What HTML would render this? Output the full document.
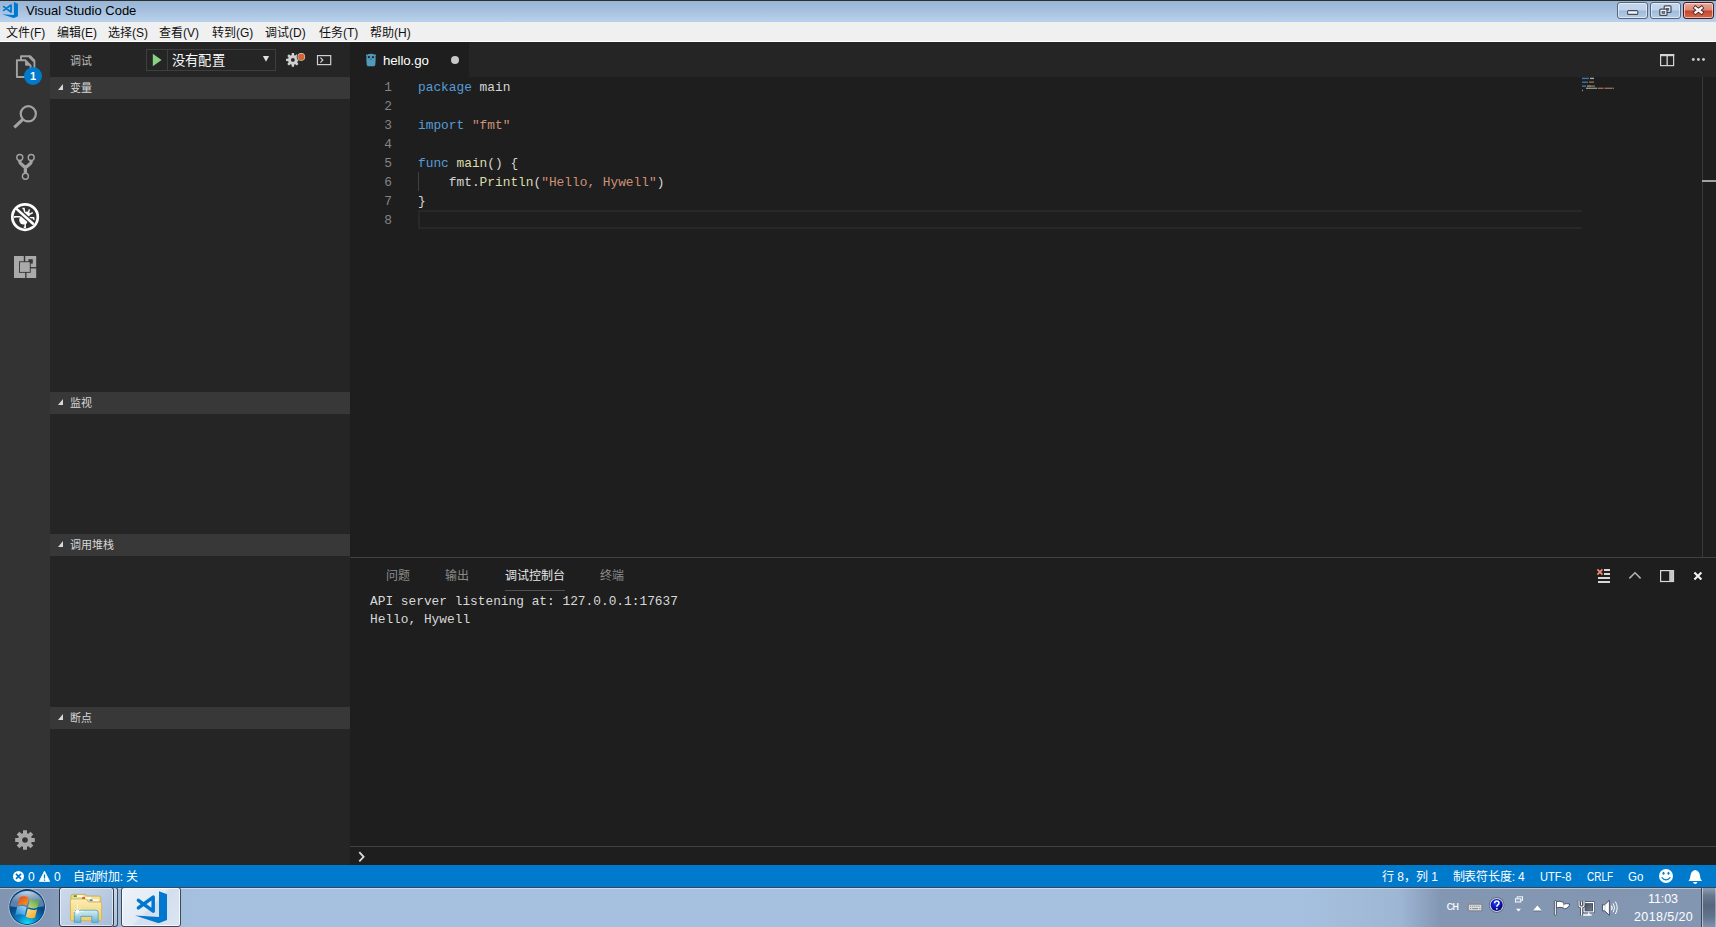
<!DOCTYPE html>
<html lang="zh-CN">
<head>
<meta charset="utf-8">
<title>Visual Studio Code</title>
<style>
html,body{margin:0;padding:0;}
body{width:1716px;height:927px;position:relative;overflow:hidden;background:#1e1e1e;font-family:"Liberation Sans",sans-serif;font-size:12px;color:#ccc;}
.abs{position:absolute;}
div,span,svg{box-sizing:border-box;}
.t{position:absolute;white-space:nowrap;overflow:visible;}
.cj{display:inline-block;white-space:nowrap;overflow:visible;vertical-align:baseline;text-align:justify;text-align-last:justify;}
/* title bar */
#titlebar{left:0;top:0;width:1716px;height:22px;background:linear-gradient(#9ab6d6 0%,#9db9d9 20%,#b9d2ec 100%);border-top:1px solid #2e2e2e;}
#menubar{left:0;top:22px;width:1716px;height:20px;background:#f0f0f0;border-bottom:1px solid #fff;color:#111;}
.wbtn{position:absolute;top:1px;height:17px;border:1px solid #56657d;border-radius:3px;box-shadow:inset 0 0 0 1px rgba(255,255,255,.55);background:linear-gradient(#c3d6ec 0%,#bfd3ea 48%,#9fbbda 52%,#b4cce6 100%);}
/* workbench */
#activity{left:0;top:42px;width:50px;height:823px;background:#333333;}
#sidebar{left:50px;top:42px;width:300px;height:823px;background:#252526;}
.sec{position:absolute;left:0;width:300px;height:22px;background:#383838;}
.sec i{position:absolute;left:8px;top:7px;width:0;height:0;border-left:5.5px solid transparent;border-bottom:6px solid #d8d8d8;}
.sec span{position:absolute;left:20px;top:0;line-height:22px;font-size:11px;font-weight:normal;color:#d6d6d6;white-space:nowrap;}
#tabs{left:350px;top:42px;width:1366px;height:35px;background:#252526;}
#tab{left:0;top:0;width:119px;height:35px;background:#1e1e1e;}
#editor{left:350px;top:77px;width:1366px;height:480px;background:#1e1e1e;}
.ln{margin-top:1px;position:absolute;left:0;width:42px;text-align:right;height:19px;line-height:19px;color:#858585;font-family:"Liberation Mono",monospace;font-size:12.83px;}
.cl{margin-top:1px;position:absolute;left:68px;height:19px;line-height:19px;color:#d4d4d4;font-family:"Liberation Mono",monospace;font-size:12.83px;white-space:pre;}
.k{color:#569cd6;}.s{color:#ce9178;}.f{color:#dcdcaa;}
#panel{left:350px;top:557px;width:1366px;height:308px;background:#1e1e1e;border-top:1px solid #414141;}
.pt{position:absolute;top:10px;height:16px;line-height:16px;font-size:12px;color:#8b8b8b;white-space:nowrap;}
.con{position:absolute;left:20px;height:18px;line-height:18px;color:#d8d8d8;font-family:"Liberation Mono",monospace;font-size:12.83px;white-space:pre;}
#status{left:0;top:865px;width:1716px;height:22px;background:#007acc;color:#fff;font-size:12px;}
#status .t{top:1px;line-height:22px;height:22px;}
#taskbar{left:0;top:887px;width:1716px;height:40px;background:linear-gradient(90deg,#8195b3 0,#8499b7 50px,#9fb9d7 120px,#a6c1df 200px,#a6c1df 1300px,#9db6d4 1400px,#8397b3 1440px,#8296b1 1716px);}
</style>
</head>
<body>
<svg width="0" height="0" style="position:absolute">
  <defs>
    <symbol id="vsc" viewBox="0 0 32.2 32.2">
      <path d="M24 0.2 L32.1 3.4 V28.9 L24 32.1Z M-0.1 24.5 L24 26.1 V32.1 L23.2 32.1Z" fill="#0078d0"/>
      <path d="M3.4 9.3 L18.2 20.1 V6.1 L3.4 16.9" stroke="#0078d0" stroke-width="3.5" fill="none" stroke-linejoin="round" stroke-linecap="round"/>
    </symbol>
    <radialGradient id="orbTop" cx="50%" cy="0%" r="75%"><stop offset="0" stop-color="#c6d6e6"/><stop offset="1" stop-color="#5b82aa"/></radialGradient>
    <radialGradient id="orbBot" cx="50%" cy="100%" r="70%"><stop offset="0" stop-color="#12e6ff"/><stop offset=".4" stop-color="#0a86c8"/><stop offset=".85" stop-color="#084a86"/><stop offset="1" stop-color="#074680"/></radialGradient>
    <linearGradient id="fr" x1="0" y1="0" x2="1" y2="1"><stop offset="0" stop-color="#e2401c"/><stop offset="1" stop-color="#f7a21c"/></linearGradient>
    <linearGradient id="fg" x1="0" y1="1" x2="1" y2="0"><stop offset="0" stop-color="#c4dc8a"/><stop offset="1" stop-color="#4ea032"/></linearGradient>
    <linearGradient id="fb" x1="0" y1="1" x2="1" y2="0"><stop offset="0" stop-color="#1a86d2"/><stop offset="1" stop-color="#a8d8f4"/></linearGradient>
    <linearGradient id="fy" x1="0" y1="0" x2="1" y2="1"><stop offset="0" stop-color="#fbe49a"/><stop offset="1" stop-color="#f8a21a"/></linearGradient>
    <linearGradient id="fold" x1="0" y1="0" x2="0" y2="1"><stop offset="0" stop-color="#fbeeb8"/><stop offset="1" stop-color="#f1cd62"/></linearGradient>
    <linearGradient id="glass" x1="0" y1="0" x2="0" y2="1"><stop offset="0" stop-color="#d6f0fb"/><stop offset="1" stop-color="#5fb2dc"/></linearGradient>
    <radialGradient id="helpb" cx="40%" cy="35%" r="70%"><stop offset="0" stop-color="#2a3cf0"/><stop offset=".55" stop-color="#0a14c0"/><stop offset="1" stop-color="#00045e"/></radialGradient>
  </defs>
</svg>

<!-- ===== Windows title bar ===== -->
<div id="titlebar" class="abs">
  <svg class="abs" style="left:2.3px;top:1px" width="16" height="16"><use href="#vsc" width="16" height="16"/></svg>
  <span class="t" style="left:26px;top:2px;font-size:13px;line-height:16px;color:#000;">Visual Studio Code</span>
  <div class="wbtn" style="left:1617px;width:31px;"></div>
  <div class="wbtn" style="left:1650px;width:31px;"></div>
  <div class="wbtn" style="left:1683px;width:31px;border-color:#4d1a1c;background:linear-gradient(#e9aa9c 0%,#dc8674 48%,#c4452b 52%,#d2684c 100%);"></div>
  <svg class="abs" style="left:1617px;top:-1px" width="99" height="22" viewBox="1617 0 99 22">
    <rect x="1627.6" y="10.6" width="10.2" height="3.8" rx="1" fill="#f7f7f7" stroke="#434d5e" stroke-width="1.1"/>
    <rect x="1664.2" y="5.9" width="6.8" height="6.4" rx="0.9" fill="#f1f3f7" stroke="#434d5e" stroke-width="1.25"/>
    <rect x="1666.6" y="8.4" width="2.2" height="1.8" fill="#6c7a90" stroke="#434d5e" stroke-width=".7"/>
    <rect x="1659.8" y="9.1" width="7.2" height="6.3" rx="0.9" fill="#f1f3f7" stroke="#434d5e" stroke-width="1.25"/>
    <rect x="1662" y="11.6" width="2.8" height="1.7" fill="#6c7a90" stroke="#434d5e" stroke-width=".7"/>
    <path d="M1693.9 6.7 L1703.1 13.7 M1703.1 6.7 L1693.9 13.7" fill="none" stroke="#43211e" stroke-width="4"/>
    <path d="M1694.5 7.15 L1702.5 13.25 M1702.5 7.15 L1694.5 13.25" fill="none" stroke="#f6f6f6" stroke-width="2.4"/>
  </svg>
</div>

<!-- ===== Menu bar ===== -->
<div id="menubar" class="abs">
  <span class="t" style="left:6px;top:4px;line-height:14px;"><span class="cj" style="width:24px">文件</span>(F)</span>
  <span class="t" style="left:57px;top:4px;line-height:14px;"><span class="cj" style="width:24px">编辑</span>(E)</span>
  <span class="t" style="left:108px;top:4px;line-height:14px;"><span class="cj" style="width:24px">选择</span>(S)</span>
  <span class="t" style="left:159px;top:4px;line-height:14px;"><span class="cj" style="width:24px">查看</span>(V)</span>
  <span class="t" style="left:212px;top:4px;line-height:14px;"><span class="cj" style="width:24px">转到</span>(G)</span>
  <span class="t" style="left:265px;top:4px;line-height:14px;"><span class="cj" style="width:24px">调试</span>(D)</span>
  <span class="t" style="left:319px;top:4px;line-height:14px;"><span class="cj" style="width:24px">任务</span>(T)</span>
  <span class="t" style="left:370px;top:4px;line-height:14px;"><span class="cj" style="width:24px">帮助</span>(H)</span>
</div>

<!-- ===== Activity bar ===== -->
<div id="activity" class="abs">
<svg class="abs" style="left:0;top:0" width="50" height="823" viewBox="0 42 50 823">
  <!-- explorer -->
  <g fill="none" stroke="#a3a3a3" stroke-width="1.9" stroke-linejoin="round">
    <path d="M21 60 V56.2 H30.2 L34.4 60.6 V72.2 H31"/>
    <path d="M29.6 56.6 L34 61.2" stroke-width="2.6"/>
    <path d="M16.9 60.2 H25.2 L30.6 65.6 V77 H16.9 Z"/>
    <path d="M25.6 61.4 V65.2 H29.4 Z" fill="#a3a3a3" stroke-width="1"/>
  </g>
  <circle cx="33" cy="76" r="9" fill="#007acc"/>
  <!-- search -->
  <circle cx="28.3" cy="113.8" r="7.6" fill="none" stroke="#a3a3a3" stroke-width="2.2"/>
  <path d="M22.6 119.6 L14.3 127.3" stroke="#a3a3a3" stroke-width="3.2" stroke-linecap="butt"/>
  <!-- git -->
  <g fill="none" stroke="#a3a3a3">
    <path d="M19.8 160.4 V161.6 Q19.8 162.6 20.6 163.4 L25.4 167.8 L30.4 163.4 Q31.2 162.6 31.2 161.6 V160.4 M25.4 166 V173.6" stroke-width="3.3" stroke-linejoin="round"/>
    <circle cx="19.8" cy="157.5" r="3" stroke-width="1.4"/>
    <circle cx="31.2" cy="157.5" r="3" stroke-width="1.4"/>
    <circle cx="25.4" cy="176.3" r="3" stroke-width="1.4"/>
  </g>
  <!-- debug (active, white) -->
  <g>
    <circle cx="25.06" cy="217.06" r="12.75" fill="none" stroke="#fff" stroke-width="2.7"/>
    <g fill="#fff" stroke="#fff">
      <ellipse cx="23.6" cy="220" rx="4.4" ry="4.6" stroke="none"/>
      <ellipse cx="27" cy="214.2" rx="2.9" ry="2.7" stroke="none"/>
      <path d="M24.8 213.4 L24 208.6 H22.4 M28.4 212.6 L29.4 209.4 M29.4 214.4 L32.8 212.6 M28.6 217.7 H33.6 L34 219.8 M20.4 216.7 H14.8 L14.6 217.8 M25.2 222 V227.2 H23.8" stroke-width="1.5" fill="none"/>
    </g>
    <clipPath id="dbgc"><circle cx="25.06" cy="217.06" r="11.6"/></clipPath><path d="M13 205.6 L37 227.3" stroke="#333" stroke-width="5" clip-path="url(#dbgc)"/>
    <path d="M16.3 208.6 L33.9 224.5" stroke="#fff" stroke-width="2.6"/>
  </g>
  <!-- extensions -->
  <g fill="#aaaaaa">
    <path d="M14 256 H23.8 V278 H14Z M23.8 268 H25.2 V278 H23.8Z"/>
    <path d="M25.2 256 H36.2 V267.1 H25.2Z"/>
    <path d="M26.5 268.4 H36.2 V278 H26.5Z"/>
    <rect x="28.4" y="259.2" width="4.4" height="4.4" fill="#3a3a3a"/>
    <rect x="19" y="261.3" width="11.7" height="11.5" fill="#333"/>
    <rect x="19.9" y="262.2" width="9.9" height="9.7"/>
  </g>
  <!-- gear -->
  <g transform="translate(25 840)" fill="#a8a8a8">
    <path fill-rule="evenodd" d="M-2.01 -6.71 L-1.95 -9.81 L1.95 -9.81 L2.01 -6.71 L3.32 -6.16 L5.56 -8.31 L8.31 -5.56 L6.16 -3.32 L6.71 -2.01 L9.81 -1.95 L9.81 1.95 L6.71 2.01 L6.16 3.32 L8.31 5.56 L5.56 8.31 L3.32 6.16 L2.01 6.71 L1.95 9.81 L-1.95 9.81 L-2.01 6.71 L-3.32 6.16 L-5.56 8.31 L-8.31 5.56 L-6.16 3.32 L-6.71 2.01 L-9.81 1.95 L-9.81 -1.95 L-6.71 -2.01 L-6.16 -3.32 L-8.31 -5.56 L-5.56 -8.31 L-3.32 -6.16Z M2.80 0 A2.80 2.80 0 1 0 -2.80 0 A2.80 2.80 0 1 0 2.80 0Z"/>
  </g>
</svg>
<span class="t" style="left:28px;top:28px;width:10px;text-align:center;font-size:11px;line-height:12px;color:#fff;font-weight:bold;">1</span>
</div>

<!-- ===== Side bar (debug) ===== -->
<div id="sidebar" class="abs">
  <span class="t" style="left:20px;top:11px;width:22px;text-align:justify;text-align-last:justify;font-size:11px;line-height:16px;color:#bbbbbb;">调试</span>
  <div class="abs" style="left:96px;top:7px;width:130px;height:22px;border:1px solid #3e3e3e;background:#252526;"></div>
  <div class="abs" style="left:117px;top:8px;width:1px;height:20px;background:#3e3e3e;"></div>
  <svg class="abs" style="left:100px;top:10px" width="14" height="16" viewBox="0 0 14 16"><path d="M2.8 1.8 L11.6 8 L2.8 14.2Z" fill="#89d185"/></svg>
  <span class="t" style="left:121.6px;top:10px;width:53.2px;text-align:justify;text-align-last:justify;font-size:13.3px;line-height:18px;color:#fafafa;">没有配置</span>
  <svg class="abs" style="left:212px;top:13px" width="8" height="8" viewBox="0 0 8 8"><path d="M0.9 1 H7.1 L4 6.8Z" fill="#e0e0e0"/></svg>
  <svg class="abs" style="left:232px;top:6px" width="56" height="24" viewBox="0 0 56 24">
    <g transform="translate(10.9 11.9)"><path fill-rule="evenodd" fill="#d0d0d0" d="M-1.33 -4.72 L-1.13 -6.81 L1.13 -6.81 L1.33 -4.72 L2.39 -4.28 L4.01 -5.61 L5.61 -4.01 L4.28 -2.39 L4.72 -1.33 L6.81 -1.13 L6.81 1.13 L4.72 1.33 L4.28 2.39 L5.61 4.01 L4.01 5.61 L2.39 4.28 L1.33 4.72 L1.13 6.81 L-1.13 6.81 L-1.33 4.72 L-2.39 4.28 L-4.01 5.61 L-5.61 4.01 L-4.28 2.39 L-4.72 1.33 L-6.81 1.13 L-6.81 -1.13 L-4.72 -1.33 L-4.28 -2.39 L-5.61 -4.01 L-4.01 -5.61 L-2.39 -4.28Z M1.90 0 A1.90 1.90 0 1 0 -1.90 0 A1.90 1.90 0 1 0 1.90 0Z"/></g>
    <circle cx="19.3" cy="8.9" r="4.6" fill="#252526"/>
    <circle cx="19.3" cy="8.9" r="3.8" fill="#e6d3c8"/>
    <circle cx="19.3" cy="8.9" r="3.2" fill="#d16632"/>
    <rect x="35.5" y="7.6" width="13.2" height="9" fill="none" stroke="#d0d0d0" stroke-width="1.2"/>
    <path d="M38.4 9.6 L40.8 12 L38.4 14.6" fill="none" stroke="#d0d0d0" stroke-width="1.2"/>
  </svg>
  <div class="sec" style="top:35px"><i></i><span style="width:22px;text-align:justify;text-align-last:justify;">变量</span></div>
  <div class="sec" style="top:350px"><i></i><span style="width:22px;text-align:justify;text-align-last:justify;">监视</span></div>
  <div class="sec" style="top:492px"><i></i><span style="width:44px;text-align:justify;text-align-last:justify;">调用堆栈</span></div>
  <div class="sec" style="top:665px"><i></i><span style="width:22px;text-align:justify;text-align-last:justify;">断点</span></div>
</div>

<!-- ===== Editor tabs ===== -->
<div id="tabs" class="abs">
  <div id="tab" class="abs">
    <svg class="abs" style="left:14px;top:10px" width="14" height="16" viewBox="364 52 14 16">
      <path d="M366 55.2 Q365.6 54.4 366.6 54.6 L367.4 54.8 Q368.4 53.8 371 53.8 Q373.6 53.8 374.6 54.8 L375.4 54.6 Q376.4 54.4 376 55.2 L375.5 56.2 Q375.9 59 375.5 62 Q375.6 65 374.4 66.2 H367.6 Q366.4 65 366.5 62 Q366.1 59 366.5 56.2Z" fill="#519aba"/>
      <circle cx="368.9" cy="57.2" r="1.15" fill="#1b2a33"/><circle cx="372.9" cy="57.2" r="1.15" fill="#1b2a33"/>
      <ellipse cx="370.9" cy="59.4" rx="0.8" ry="0.5" fill="#24506a"/>
    </svg>
    <span class="t" style="left:33px;top:10px;font-size:13.3px;line-height:18px;color:#fff;letter-spacing:-0.1px;">hello.go</span>
    <div class="abs" style="left:101px;top:14px;width:8px;height:8px;border-radius:50%;background:#c8c8c8;"></div>
  </div>
  <svg class="abs" style="left:1306px;top:8px" width="60" height="20" viewBox="1656 50 60 20">
    <rect x="1660.6" y="54.6" width="13" height="11" fill="none" stroke="#d4d4d4" stroke-width="1.2"/>
    <rect x="1660" y="54" width="14.2" height="2.2" fill="#d4d4d4"/>
    <rect x="1666.5" y="55" width="1.3" height="11" fill="#d4d4d4"/>
    <circle cx="1693.3" cy="59.5" r="1.45" fill="#c8c8c8"/><circle cx="1698.4" cy="59.5" r="1.45" fill="#c8c8c8"/><circle cx="1703.5" cy="59.5" r="1.45" fill="#c8c8c8"/>
  </svg>
</div>

<!-- ===== Editor ===== -->
<div id="editor" class="abs">
  <div class="ln" style="top:0">1</div>
  <div class="ln" style="top:19px">2</div>
  <div class="ln" style="top:38px">3</div>
  <div class="ln" style="top:57px">4</div>
  <div class="ln" style="top:76px">5</div>
  <div class="ln" style="top:95px">6</div>
  <div class="ln" style="top:114px">7</div>
  <div class="ln" style="top:133px">8</div>
  <div class="abs" style="left:68px;top:133px;width:1164px;height:19px;border:2px solid #282828;border-right:none;"></div>
  <div class="abs" style="left:68px;top:95px;width:1px;height:19px;background:#404040;"></div>
  <div class="cl" style="top:0"><span class="k">package</span> main</div>
  <div class="cl" style="top:38px"><span class="k">import</span> <span class="s">"fmt"</span></div>
  <div class="cl" style="top:76px"><span class="k">func</span> <span class="f">main</span>() {</div>
  <div class="cl" style="top:95px">    fmt.<span class="f">Println</span>(<span class="s">"Hello, Hywell"</span>)</div>
  <div class="cl" style="top:114px">}</div>
  <svg class="abs" style="left:1232px;top:0" width="40" height="16" viewBox="0 0 40 16" opacity=".8">
    <rect x="0" y="0.7" width="7" height="1.4" fill="#4a8ec8"/><rect x="8" y="0.7" width="4" height="1.4" fill="#c8c8c8"/>
    <rect x="0" y="4.6" width="6" height="1.3" fill="#4a8ec8"/><rect x="7" y="4.4" width="5" height="1.4" fill="#b87c60"/>
    <rect x="0" y="8.4" width="4" height="1.4" fill="#4a8ec8"/><rect x="5" y="8.4" width="4" height="1.4" fill="#b8b890"/><rect x="9" y="8.4" width="4" height="1.4" fill="#8a8a8a"/>
    <rect x="4" y="10.6" width="4" height="1.4" fill="#b0b0b0"/><rect x="8" y="10.6" width="7" height="1.4" fill="#b0b088"/><rect x="15.6" y="10.6" width="6" height="1.4" fill="#b87c60"/><rect x="22.6" y="10.6" width="8" height="1.4" fill="#b87c60"/><rect x="31" y="10.6" width="1" height="1.4" fill="#909090"/>
    <rect x="0" y="12.8" width="1" height="1.4" fill="#b0b0b0"/>
  </svg>
  <div class="abs" style="left:1352px;top:0;width:1px;height:480px;background:#3a3a3a;"></div>
  <div class="abs" style="left:1352px;top:103px;width:14px;height:2px;background:#a0a0a0;"></div>
</div>

<!-- ===== Panel ===== -->
<div id="panel" class="abs">
  <span class="pt" style="left:36px;width:24px;text-align:justify;text-align-last:justify;">问题</span>
  <span class="pt" style="left:95px;width:24px;text-align:justify;text-align-last:justify;">输出</span>
  <span class="pt" style="left:155px;width:60px;text-align:justify;text-align-last:justify;color:#e7e7e7;">调试控制台</span>
  <span class="pt" style="left:250px;width:24px;text-align:justify;text-align-last:justify;">终端</span>
  <div class="abs" style="left:155px;top:32px;width:60px;height:1px;background:#505050;"></div>
  <div class="con" style="top:35px">API server listening at: 127.0.0.1:17637</div>
  <div class="con" style="top:53px">Hello, Hywell</div>
  <div class="abs" style="left:0;top:288px;width:1366px;height:1px;background:#414141;"></div>
  <svg class="abs" style="left:1240px;top:6px" width="120" height="26" viewBox="1590 564 120 26">
    <g fill="#d8d8d8"><rect x="1604" y="569" width="6" height="2"/><rect x="1604" y="573" width="6" height="2"/><rect x="1598" y="577" width="12" height="2"/><rect x="1598" y="581" width="12" height="2"/></g>
    <path d="M1597.4 569.4 L1602.4 574.6 M1602.4 569.4 L1597.4 574.6" stroke="#f48771" stroke-width="1.7" fill="none"/>
    <path d="M1629.4 578.4 L1635 572.8 L1640.6 578.4" stroke="#b4b4b4" stroke-width="1.5" fill="none"/>
    <rect x="1660.6" y="570.6" width="12.9" height="10.9" fill="none" stroke="#d8d8d8" stroke-width="1.2"/>
    <rect x="1669.2" y="570.6" width="4.3" height="10.9" fill="#c8c8c8"/>
    <path d="M1694.4 572.6 L1701.4 579.6 M1701.4 572.6 L1694.4 579.6" stroke="#f0f0f0" stroke-width="2.1" fill="none"/>
  </svg>
  <svg class="abs" style="left:6px;top:291px" width="12" height="14" viewBox="356 849 12 14"><path d="M359.3 852.2 L363.6 856.8 L359.3 861.4" fill="none" stroke="#dcdcdc" stroke-width="1.8"/></svg>
</div>

<!-- ===== Status bar ===== -->
<div id="status" class="abs">
  <svg class="abs" style="left:10px;top:3px" width="44" height="17" viewBox="10 868 44 17">
    <circle cx="18.5" cy="876.4" r="5.5" fill="#fff"/>
    <path d="M16 873.9 L21 878.9 M21 873.9 L16 878.9" stroke="#007acc" stroke-width="1.7"/>
    <path d="M44.5 871.2 L49.7 881.4 H39.3Z" fill="#fff" stroke="#fff" stroke-width=".8" stroke-linejoin="round"/>
    <path d="M44.5 874.4 V878.6 M44.5 879.6 V880.8" stroke="#007acc" stroke-width="1.3"/>
  </svg>
  <svg class="abs" style="left:1656px;top:3px" width="50" height="18" viewBox="1656 868 50 18">
    <circle cx="1666" cy="876" r="7" fill="#fff"/>
    <ellipse cx="1663.5" cy="873.3" rx="1" ry="1.5" fill="#007acc"/><ellipse cx="1668.5" cy="873.3" rx="1" ry="1.5" fill="#007acc"/>
    <path d="M1661.6 877.4 Q1666 882.4 1670.4 877.4" fill="none" stroke="#007acc" stroke-width="1.3"/>
    <path d="M1695.2 870 Q1699.6 871 1700 876 Q1700.2 879 1702 880.9 H1688.5 Q1690.2 879 1690.4 876 Q1690.8 871 1695.2 870Z" fill="#fff"/>
    <path d="M1693 882 H1697.4 Q1696.8 884 1695.2 884 Q1693.6 884 1693 882Z" fill="#fff"/>
  </svg>
  <span class="t" style="left:28px;">0</span>
  <span class="t" style="left:54px;">0</span>
  <span class="t" style="left:73px;letter-spacing:-0.3px;"><span class="cj" style="width:46.8px">自动附加</span>: 关</span>
  <span class="t" style="left:1382px;"><span class="cj" style="width:12px">行</span> 8<span class="cj" style="width:12px">，</span><span class="cj" style="width:12px">列</span> 1</span>
  <span class="t" style="left:1452.5px;letter-spacing:-0.15px;"><span class="cj" style="width:59.25px">制表符长度</span>: 4</span>
  <span class="t" style="left:1540px;transform:scaleX(.925);transform-origin:0 0;">UTF-8</span>
  <span class="t" style="left:1586.5px;transform:scaleX(.83);transform-origin:0 0;">CRLF</span>
  <span class="t" style="left:1627.5px;transform:scaleX(.96);transform-origin:0 0;">Go</span>
</div>

<!-- ===== Windows taskbar ===== -->
<div id="taskbar" class="abs">
  <div class="abs" style="left:0;top:0;width:1716px;height:1px;background:#3a4658;"></div>
  <div class="abs" style="left:0;top:1px;width:1716px;height:1px;background:rgba(255,255,255,.42);"></div>
  <!-- start orb -->
  <svg class="abs" style="left:5px;top:0" width="44" height="40" viewBox="5 887 44 40">
    <circle cx="27.1" cy="907" r="18.6" fill="#c4d2e2"/>
    <circle cx="27.1" cy="907" r="17.9" fill="#0b4378"/>
    <circle cx="27.1" cy="907" r="17.1" fill="url(#orbBot)"/>
    <path d="M10.1 906.2 A17.1 17.1 0 0 1 44.1 906.2 Q27 909.2 10.1 906.2Z" fill="url(#orbTop)"/>
    <path d="M19.6 897.4 Q24 895 28.8 897.6 L27 905.6 Q22.6 903.4 17.6 905.6Z" fill="url(#fr)"/>
    <path d="M30 899 Q34.6 901.6 39.2 899.4 L37.4 907.6 Q32.8 909.6 28.2 907Z" fill="url(#fg)"/>
    <path d="M17.2 907 Q21.8 905 26.6 907.2 L24.6 915.4 Q20 913.2 15.2 915.4Z" fill="url(#fb)"/>
    <path d="M27.8 908.6 Q32.4 911.2 37 909.2 L35 917.4 Q30.4 919.4 25.8 916.8Z" fill="url(#fy)"/>
  </svg>
  <!-- explorer button -->
  <div class="abs" style="left:113px;top:0;width:5px;height:39.5px;border:1px solid #3c4a60;border-left:none;border-radius:0 3px 3px 0;background:linear-gradient(#c9d8ea,#a9bfdc);"></div>
  <div class="abs" style="left:59px;top:0;width:55px;height:39.5px;border:1px solid #2c384b;border-radius:3px;box-shadow:inset 0 0 0 1px rgba(255,255,255,.55);background:linear-gradient(135deg,#cddaeb 0%,#bccde3 50%,#a6bcd9 100%);"></div>
  <svg class="abs" style="left:68px;top:5px" width="36" height="32" viewBox="68 892 36 32">
    <path d="M71 896.2 Q71 894.4 72.8 894.4 H85 Q86.4 894.4 86.6 896 H99 Q100.8 896 100.8 898 V910 H71Z" fill="#f3d98a" stroke="#c9a84e" stroke-width=".8"/>
    <rect x="73.6" y="895.3" width="3.2" height="1.7" fill="#1db32a"/><rect x="77" y="895.3" width="6" height="1.7" fill="#fff"/>
    <path d="M81.4 897.4 H99.6 V900 H81.4Z" fill="#f6e2a0"/>
    <rect x="82.2" y="897.3" width="2.8" height="1.7" fill="#d8281e"/><rect x="85.2" y="897.3" width="6" height="1.7" fill="#fff"/>
    <rect x="89.8" y="899.4" width="2.8" height="1.7" fill="#1e8fe6"/><rect x="92.8" y="899.4" width="5.6" height="1.7" fill="#fff"/>
    <path d="M70.4 900.4 Q70.4 899 72 899 H86.4 L88.4 902 H100 Q101.6 902 101.6 903.6 V919.4 Q101.6 920.8 100 920.8 H72 Q70.4 920.8 70.4 919.4Z" fill="url(#fold)" stroke="#d1ad4c" stroke-width=".8"/>
    <path d="M74.4 922.4 V912.6 Q74.4 910.2 77 910.2 H95.6 Q98.2 910.2 98.2 912.6 V922.4 H91.8 V916.4 H80.8 V922.4Z" fill="url(#glass)" stroke="#3d9ad2" stroke-width=".8" opacity=".93"/>
    <path d="M77.4 904 V915 M73 911.4 H84 M74.6 908.6 L81 914.6 M80.6 908 L74.6 914.8" stroke="#fff" stroke-width=".7" opacity=".85"/>
    <circle cx="77.4" cy="911.4" r="1.7" fill="#fff"/>
  </svg>
  <!-- vscode button (active) -->
  <div class="abs" style="left:121px;top:0;width:60px;height:39.5px;border:1px solid #3c4a60;border-radius:3px;box-shadow:inset 0 0 0 1px rgba(255,255,255,.75);background:linear-gradient(135deg,#eef3f9 0%,#e2eaf4 48%,#d3dfee 52%,#dbe5f2 100%);"></div>
  <svg class="abs" style="left:135px;top:3.7px" width="32.2" height="32.2"><use href="#vsc" width="32.2" height="32.2"/></svg>
  <!-- tray -->
  <span class="t" style="left:1446.5px;top:13px;font-family:'Liberation Mono',monospace;font-size:11.5px;line-height:14px;color:#fff;letter-spacing:-1.2px;">CH</span>
  <svg class="abs" style="left:1464px;top:6px" width="160" height="32" viewBox="1464 893 160 32">
    <!-- keyboard -->
    <path d="M1469.6 903.4 Q1471.4 899.4 1474 900 T1478 900.4 T1480.6 898.4" fill="none" stroke="#8d939b" stroke-width="1.1"/>
    <rect x="1468.2" y="904.1" width="13.8" height="6.8" rx="1" fill="#dadde1" stroke="#82888f" stroke-width="1.3"/>
    <path d="M1470 906.2 H1480.4" stroke="#80868e" stroke-width="1" stroke-dasharray="1.2 .9"/>
    <path d="M1470 908.6 H1471.2 M1472.2 908.6 H1478 M1479.2 908.6 H1480.4" stroke="#80868e" stroke-width="1"/>
    <!-- help -->
    <circle cx="1496.7" cy="905" r="7.7" fill="#59647a"/>
    <circle cx="1496.7" cy="905" r="7" fill="#c8d0dc"/>
    <circle cx="1496.7" cy="905" r="6" fill="url(#helpb)"/>
    <path d="M1494.6 903.2 Q1494.6 901 1496.8 901 Q1499 901 1499 903 Q1499 904.4 1497.6 905.2 Q1496.8 905.8 1496.8 906.8" fill="none" stroke="#fff" stroke-width="1.5"/>
    <circle cx="1496.8" cy="908.8" r=".9" fill="#fff"/>
    <!-- tiny restore + arrow -->
    <rect x="1517.2" y="896.8" width="5.4" height="3.4" fill="none" stroke="#fff" stroke-width=".9"/>
    <rect x="1515.4" y="898.8" width="5.4" height="3.2" fill="#8a9fbc" stroke="#fff" stroke-width=".9"/>
    <path d="M1516 908.8 H1521 L1518.5 911.6Z" fill="#fff"/>
    <!-- show hidden -->
    <path d="M1533 910.8 L1537.4 905.5 L1541.8 910.8Z" fill="#fff"/><path d="M1533.4 911 H1541.4" stroke="#56627a" stroke-width=".7"/>
    <!-- flag -->
    <path d="M1556.4 901.5 Q1560 900.7 1563.5 902.3 V904.3 Q1566.6 903.1 1569.7 904 Q1569.3 907.8 1564.3 909 L1563.5 907.9 Q1560 906.7 1556.4 907.9Z" fill="#fff" stroke="#2e3545" stroke-width=".8"/>
    <path d="M1563.5 902.6 V907.6" stroke="#aab2c0" stroke-width=".6"/>
    <rect x="1554.4" y="900.6" width="1.9" height="14.7" rx=".5" fill="#fff" stroke="#2e3545" stroke-width=".7"/>
    <!-- network -->
    <linearGradient id="scr" x1="0" y1="0" x2="1" y2="1"><stop offset="0" stop-color="#39475a"/><stop offset="1" stop-color="#74869e"/></linearGradient>
    <rect x="1584" y="902.6" width="9.6" height="9.3" fill="url(#scr)" stroke="#2e3545" stroke-width="2.2"/>
    <rect x="1584" y="902.6" width="9.6" height="9.3" fill="none" stroke="#fff" stroke-width="1.2"/>
    <path d="M1588.7 912.4 V914.4 M1583.2 914.9 H1591.6" stroke="#fff" stroke-width="1.5" fill="none"/>
    <g fill="none" stroke="#2e3545" stroke-width="2.4"><path d="M1579 900.4 V905.2 Q1579 907 1581.5 907 Q1584 907 1584 905.2 V900.4 M1581.5 901.8 V905 M1581.6 907 V915.4"/></g>
    <g fill="none" stroke="#fff" stroke-width="1.2"><path d="M1579 900.4 V905.2 Q1579 907 1581.5 907 Q1584 907 1584 905.2 V900.4 M1581.5 901.8 V905 M1581.6 907 V915.4"/></g>
    <!-- volume -->
    <path d="M1602.4 904.8 H1604.6 L1609.4 900.3 V915.3 L1604.6 910.8 H1602.4Z" fill="#fff" stroke="#2e3545" stroke-width=".8"/>
    <path d="M1605 905 V910.6" stroke="#aab2c0" stroke-width=".6"/>
    <path d="M1611.4 905.6 Q1612.8 907.8 1611.4 910" fill="none" stroke="#fff" stroke-width="1.2"/>
    <path d="M1613.2 903.4 Q1616 907.8 1613.2 912.2 M1615.4 901.6 Q1619 907.8 1615.4 914" fill="none" stroke="#fff" stroke-width="1"/>
  </svg>
  <!-- show desktop -->
  <div class="abs" style="left:1701px;top:1px;width:15px;height:39px;border-left:1px solid #3b4759;box-shadow:inset 1px 0 0 rgba(255,255,255,.5),inset -1px 0 0 rgba(255,255,255,.35);background:linear-gradient(#8e9eb3 0%,#66778f 20%,#56667e 45%,#62748e 75%,#8093ae 100%);"></div>
  <span class="t" style="left:1648px;top:5px;font-size:12.5px;line-height:14px;color:#fff;letter-spacing:-0.1px;">11:03</span>
  <span class="t" style="left:1634px;top:23px;font-size:12.5px;line-height:14px;color:#fff;letter-spacing:.4px;">2018/5/20</span>
</div>

</body>
</html>
